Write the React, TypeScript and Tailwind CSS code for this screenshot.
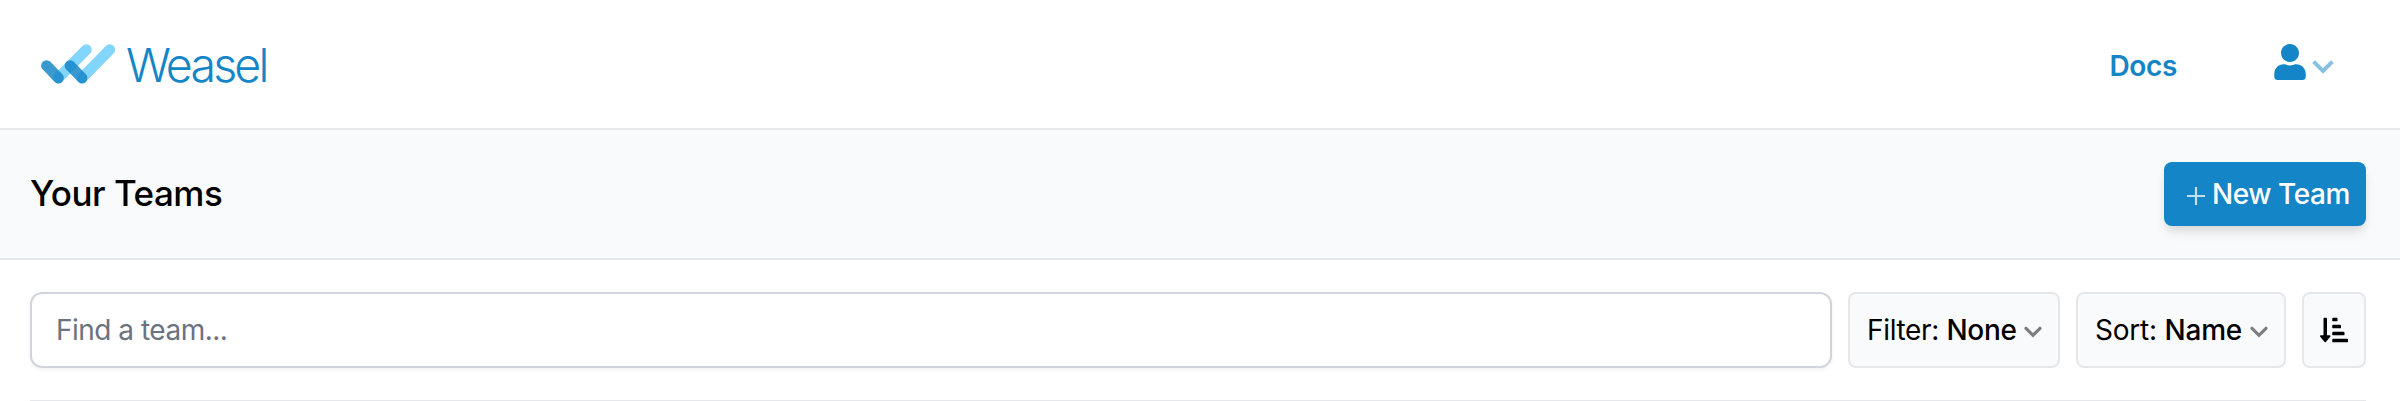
import { FaUser, FaSortAmountDownAlt } from "react-icons/fa";

function Logo() {
  return (
    <a href="#" className="flex items-center text-[#1485c6]">
      <svg className="h-[42px] w-[76px]" viewBox="40 43 76 42" fill="none" strokeWidth="10.8" strokeLinecap="round">
        <g stroke="#82d5fd">
          <path d="M58.4 78 L86.3 49.7" />
          <path d="M82 78 L109.7 49.7" />
        </g>
        <g stroke="#1485c6" strokeOpacity="0.84">
          <path d="M46.5 65.6 L58.4 78" />
          <path d="M70 65.6 L82 78" />
        </g>
      </svg>
      <span className="mt-[2px] ml-[10px] text-[46.5px] leading-[56px] font-light tracking-[-0.06em]">Weasel</span>
    </a>
  );
}

function Select({ label, value, className }: { label: string; value: string; className: string }) {
  return (
    <button
      className={`flex h-[76px] shrink-0 items-center justify-between rounded-lg border-2 border-[#e5e7eb] bg-[#f9fafc] pr-4 pl-[17px] text-[28px] ${className}`}
    >
      <span className="whitespace-nowrap">
        {label}: <span className="font-medium">{value}</span>
      </span>
      <svg
        className="mt-1 h-3 w-[18px] shrink-0 text-[#7c7d7e]"
        viewBox="0 0 18 12"
        fill="none"
        stroke="currentColor"
        strokeWidth="3.2"
        strokeLinecap="round"
      >
        <path d="M2 2.3 L9 9.3 L16 2.3" />
      </svg>
    </button>
  );
}

export default function App() {
  return (
    <div className="h-[401px] overflow-hidden bg-white font-['Inter',sans-serif] text-black">
      <header className="flex h-[130px] items-center justify-between border-b-2 border-[#e5e7eb] pr-[66px] pl-10">
        <Logo />
        <nav className="flex items-center text-[#1485c6]">
          <a href="#" className="mt-1 mr-[97px] text-[28px] leading-10 font-semibold tracking-[-0.012em]">
            Docs
          </a>
          <button className="flex items-center">
            <FaUser className="mb-[4px] h-9 w-8" />
            <svg
              className="mt-[5px] ml-[6px] h-[14px] w-[22px] opacity-50"
              viewBox="0 0 22 14"
              fill="none"
              stroke="currentColor"
              strokeWidth="4"
            >
              <path d="M1.6 1.6 L11 11 L20.4 1.6" />
            </svg>
          </button>
        </nav>
      </header>

      <section className="flex h-[130px] items-center justify-between border-b-2 border-[#e5e7eb] bg-[#f9fafc] pr-[34px] pl-[30px]">
        <h1 className="mb-[2px] text-[35px] leading-[48px] font-medium tracking-[-0.014em]">Your Teams</h1>
        <button className="flex h-16 w-[202px] items-center rounded-lg bg-[#1485c6] pl-[22px] text-[28px] font-medium text-white shadow-[0_8px_12px_-2px_rgba(0,0,0,0.1),0_4px_8px_-2px_rgba(0,0,0,0.06)]">
          <svg className="mt-1 h-5 w-5 shrink-0 opacity-75" viewBox="0 0 20 20" stroke="currentColor" strokeWidth="2.2">
            <path d="M10 1v18M1 10h18" />
          </svg>
          <span className="ml-[6px] whitespace-nowrap tracking-[-0.016em]">New Team</span>
        </button>
      </section>

      <main className="pt-8 pr-[34px] pl-[30px]">
        <div className="flex gap-4">
          <input
            type="text"
            placeholder="Find a team..."
            className="h-[76px] min-w-0 flex-1 rounded-xl border-2 border-[#d1d5db] bg-white px-6 text-[28px] tracking-[-0.018em] shadow-[0_2px_4px_0_rgba(0,0,0,0.05)] placeholder:text-[#6b7280]"
          />
          <Select label="Filter" value="None" className="w-[212px] tracking-[-0.012em]" />
          <Select label="Sort" value="Name" className="w-[210px] tracking-[-0.008em]" />
          <button className="flex h-[76px] w-16 shrink-0 items-center justify-center rounded-lg border-2 border-[#e5e7eb] bg-[#f9fafc]">
            <FaSortAmountDownAlt className="h-7 w-7" />
          </button>
        </div>
        <hr className="mt-8 border-t-2 border-[#e5e7eb]" />
      </main>
    </div>
  );
}
